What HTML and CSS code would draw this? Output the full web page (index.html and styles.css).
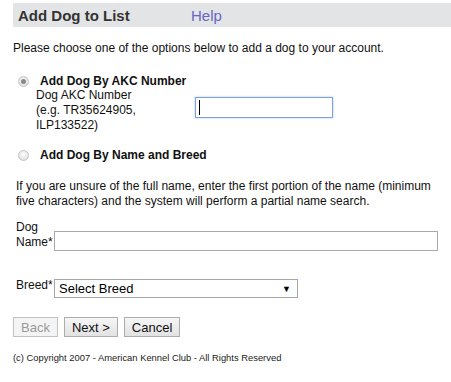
FILE: index.html
```html
<!DOCTYPE html>
<html>
<head>
<meta charset="utf-8">
<link rel="stylesheet" href="styles.css">
</head>
<body>
<div class="page">
  <div class="titlebar">
    <span class="title">Add Dog to List</span>
    <span class="help">Help</span>
  </div>
  <p class="intro">Please choose one of the options below to add a dog to your account.</p>

  <div class="option">
    <span class="radio checked"></span>
    <span class="opt-label">Add Dog By AKC Number</span>
  </div>
  <div class="akc-row">
    <div class="akc-label">Dog AKC Number<br>(e.g. TR35624905,<br>ILP133522)</div>
    <div class="akc-input"><span class="caret"></span></div>
  </div>

  <div class="option option2">
    <span class="radio"></span>
    <span class="opt-label">Add Dog By Name and Breed</span>
  </div>
  <p class="hint">If you are unsure of the full name, enter the first portion of the name (minimum five characters) and the system will perform a partial name search.</p>

  <div class="field name-field">
    <div class="field-label">Dog<br>Name*</div>
    <div class="text-input"></div>
  </div>
  <div class="field breed-field">
    <div class="field-label">Breed*</div>
    <div class="select"><span>Select Breed</span><span class="arrow">▼</span></div>
  </div>

  <div class="buttons">
    <span class="btn disabled">Back</span>
    <span class="btn">Next &gt;</span>
    <span class="btn">Cancel</span>
  </div>
  <p class="copy">(c) Copyright 2007 - American Kennel Club - All Rights Reserved</p>
</div>
</body>
</html>
```

FILE: styles.css
```css
html, body { margin: 0; padding: 0; background: #fff; }
body { font-family: "Liberation Sans", Arial, sans-serif; font-size: 12px; color: #111; }
.page { padding: 3px 0 0 13px; }
.titlebar {
  background: #e3e4e5;
  height: 24px;
  display: flex;
  align-items: center;
  padding-left: 5px;
}
.title { font-weight: bold; font-size: 15px; color: #333; width: 173px; }
.help { font-size: 15px; color: #6666c6; }
.intro { margin: 14px 0 0 0; line-height: 14px; }
.option { display: flex; align-items: center; margin-top: 19px; padding-left: 5px; height: 14px; }
.option2 { margin-top: 15px; }
.radio {
  width: 11px; height: 11px; border-radius: 50%;
  border: 1px solid #c4c4c4;
  background: radial-gradient(circle at 50% 40%, #fdfdfd, #d8d8d8);
  box-sizing: border-box;
  position: relative;
  margin-right: 11px;
}
.radio.checked::after {
  content: ""; position: absolute; left: 2px; top: 2px; width: 5px; height: 5px;
  border-radius: 50%; background: #888;
}
.opt-label { font-weight: bold; color: #111; }
.akc-row { display: flex; align-items: center; padding-left: 23px; margin-top: 0; }
.akc-label { width: 159px; line-height: 15px; }
.akc-input {
  width: 138px; height: 21px; box-sizing: border-box;
  border: 1px solid #7ea2e0;
  box-shadow: 0 0 2px #a9c4f2;
  display: flex; align-items: center; padding-left: 3px;
  margin-top: -7px;
}
.caret { width: 1px; height: 15px; background: #000; }
.hint { margin: 17px 0 0 3px; line-height: 15px; width: 430px; }
.field { display: flex; padding-left: 3px; }
.field-label { width: 38px; line-height: 15px; }
.name-field { margin-top: 11px; align-items: flex-end; }
.text-input {
  width: 384px; height: 20px; box-sizing: border-box;
  border: 1px solid #a9a9a9; margin-bottom: -1px;
}
.breed-field { margin-top: 28px; align-items: flex-start; }
.select {
  width: 244px; height: 19px; box-sizing: border-box;
  border: 1px solid #a6a6a6;
  display: flex; justify-content: space-between; align-items: center;
  padding: 0 6px 0 4px;
  font-size: 13px; color: #000; margin-top: 1px;
}
.arrow { font-size: 9px; }
.buttons { display: flex; gap: 6px; margin-top: 19px; }
.btn {
  height: 20px; box-sizing: border-box;
  border: 1px solid #acacac;
  background: linear-gradient(#f6f6f6, #e2e2e2);
  font-size: 13px; color: #111;
  display: flex; align-items: center; justify-content: center;
  padding: 0 7px;
}
.btn.disabled { color: #9a9a9a; background: #f4f4f4; border-color: #c2c2c2; }
.copy { margin: 15px 0 0 0; font-size: 9.4px; color: #222; }
```
